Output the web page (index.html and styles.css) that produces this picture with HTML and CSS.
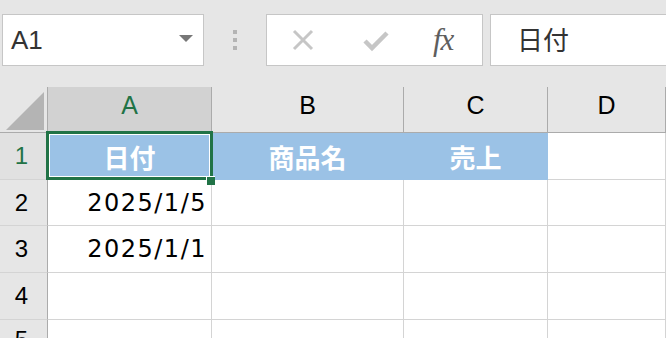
FILE: index.html
```html
<!DOCTYPE html>
<html lang="ja">
<head>
    <meta charset="UTF-8">
    <title>Sheet1</title>
    <link rel="stylesheet" href="styles.css">
</head>
<body>
<!-- Barra de fórmulas -->
<div class="toolbar">
    <div class="name-box">
        <span class="name-text">A1</span>
        <span class="drop-arrow"></span>
    </div>
    <div class="grip">
        <span></span><span></span><span></span>
    </div>
    <div class="fx-buttons">
        <svg class="icon-x" width="24" height="24" viewBox="0 0 24 24">
            <path d="M3 3 L21 21 M21 3 L3 21" stroke="#c6c6c6" stroke-width="3" fill="none"/>
        </svg>
        <svg class="icon-check" width="28" height="22" viewBox="0 0 28 22">
            <path d="M3 11 L10 18 L25 3" stroke="#c6c6c6" stroke-width="4.5" fill="none"/>
        </svg>
        <span class="fx">fx</span>
    </div>
    <div class="formula-box">日付</div>
</div>

<!-- Hoja -->
<div class="sheet">
    <div class="corner"><span class="corner-tri"></span></div>
    <div class="col-head selected">A</div>
    <div class="col-head">B</div>
    <div class="col-head">C</div>
    <div class="col-head">D</div>

    <div class="row-head selected">1</div>
    <div class="cell title">日付</div>
    <div class="cell title">商品名</div>
    <div class="cell title">売上</div>
    <div class="cell"></div>

    <div class="row-head">2</div>
    <div class="cell num">2025/1/5</div>
    <div class="cell"></div>
    <div class="cell"></div>
    <div class="cell"></div>

    <div class="row-head">3</div>
    <div class="cell num">2025/1/1</div>
    <div class="cell"></div>
    <div class="cell"></div>
    <div class="cell"></div>

    <div class="row-head">4</div>
    <div class="cell"></div>
    <div class="cell"></div>
    <div class="cell"></div>
    <div class="cell"></div>

    <div class="row-head last">5</div>
    <div class="cell"></div>
    <div class="cell"></div>
    <div class="cell"></div>
    <div class="cell"></div>

    <!-- Celda activa -->
    <div class="selection"><span class="handle"></span></div>
</div>
</body>
</html>
```

FILE: styles.css
```css
/* General */
body {
    margin: 0;
    background-color: #e6e6e6;
    font-family: "Noto Sans CJK JP", "Noto Sans", sans-serif;
    color: #000;
    overflow: hidden;
    height: 338px;
}

/* Barra de fórmulas */
.toolbar {
    display: flex;
    align-items: flex-start;
    height: 87px;
    padding: 14px 0 0 2px;
    box-sizing: border-box;
}

.name-box {
    width: 202px;
    height: 52px;
    background-color: #fff;
    border: 1px solid #c6c6c6;
    box-sizing: border-box;
    display: flex;
    align-items: center;
    justify-content: space-between;
    padding: 0 10px 0 8px;
}

.name-text {
    font-family: "Liberation Sans", sans-serif;
    font-size: 26px;
    color: #333;
}

.drop-arrow {
    width: 0;
    height: 0;
    border-left: 7px solid transparent;
    border-right: 7px solid transparent;
    border-top: 7px solid #777;
    margin-bottom: 4px;
}

.grip {
    width: 62px;
    display: flex;
    flex-direction: column;
    align-items: center;
    gap: 4px;
    padding-top: 16px;
}

.grip span {
    width: 4px;
    height: 4px;
    background-color: #b4b4b4;
}

.fx-buttons {
    width: 217px;
    height: 52px;
    background-color: #fff;
    border: 1px solid #c6c6c6;
    box-sizing: border-box;
    display: flex;
    align-items: center;
    padding-left: 24px;
}

.icon-x {
    margin-right: 47px;
}

.icon-check {
    margin-top: 2px;
    margin-right: 43px;
}

.fx {
    font-family: "Liberation Serif", serif;
    font-style: italic;
    font-size: 31px;
    color: #5e5e5e;
    letter-spacing: -1px;
}

.formula-box {
    flex: 1;
    height: 52px;
    margin-left: 7px;
    background-color: #fff;
    border: 1px solid #c6c6c6;
    border-right: none;
    box-sizing: border-box;
    font-size: 26px;
    color: #333;
    padding-left: 26px;
    line-height: 48px;
}

/* Hoja */
.sheet {
    position: relative;
    display: grid;
    grid-template-columns: 48px 164px 192px 144px 1fr;
    grid-template-rows: 46px 47px 46px 47px 47px 47px;
    background-color: #fff;
}

.corner {
    background-color: #e6e6e6;
    border-right: 1px solid #ababab;
    border-bottom: 1px solid #ababab;
    position: relative;
}

.corner-tri {
    position: absolute;
    right: 3px;
    bottom: 2px;
    width: 0;
    height: 0;
    border-left: 38px solid transparent;
    border-bottom: 38px solid #b4b4b4;
}

.col-head {
    background-color: #e6e6e6;
    border-right: 1px solid #ababab;
    border-bottom: 1px solid #ababab;
    font-family: "Liberation Sans", sans-serif;
    font-size: 25px;
    display: flex;
    align-items: center;
    justify-content: center;
    padding-bottom: 8px;
}

.col-head.selected {
    background-color: #d2d2d2;
    color: #217346;
}

.row-head {
    background-color: #e6e6e6;
    border-right: 1px solid #ababab;
    border-bottom: 1px solid #d4d4d4;
    font-family: "Liberation Sans", sans-serif;
    font-size: 24px;
    display: flex;
    align-items: center;
    justify-content: center;
    padding-right: 4px;
}

.row-head.last {
    align-items: flex-start;
    padding-top: 6px;
}

.row-head.selected {
    background-color: #e1e1e1;
    color: #217346;
}

.cell {
    border-right: 1px solid #d4d4d4;
    border-bottom: 1px solid #d4d4d4;
    display: flex;
    align-items: center;
}

.cell.title {
    background-color: #9bc2e6;
    color: #fff;
    font-weight: bold;
    font-size: 26px;
    justify-content: center;
    border-right-color: #9bc2e6;
    border-bottom-color: #9bc2e6;
}

.cell.num {
    justify-content: flex-end;
    font-family: "DejaVu Sans", sans-serif;
    font-size: 24px;
    letter-spacing: 1.5px;
    padding-right: 4px;
}

/* Selección */
.selection {
    position: absolute;
    left: 46px;
    top: 44px;
    width: 167px;
    height: 49px;
    border: 3px solid #217346;
    box-sizing: border-box;
    box-shadow: inset 0 0 0 1px #fff;
}

.handle {
    position: absolute;
    right: -5px;
    bottom: -8px;
    width: 8px;
    height: 8px;
    background-color: #217346;
    border-left: 1px solid #fff;
    border-top: 1px solid #fff;
}
```
